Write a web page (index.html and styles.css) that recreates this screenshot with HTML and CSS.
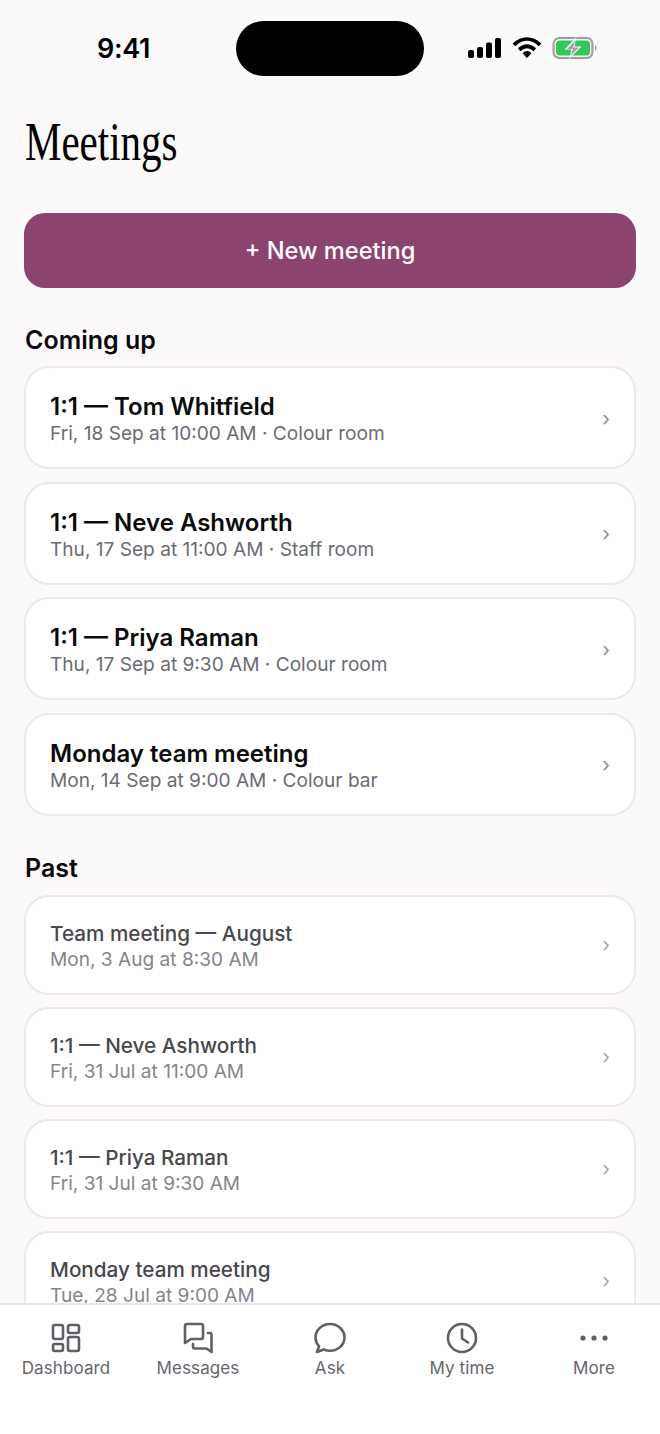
FILE: index.html
```html
<!DOCTYPE html>
<html lang="en">
<head>
    <meta charset="UTF-8">
    <meta name="viewport" content="width=device-width, initial-scale=1.0">
    <title>Meetings</title>
    <link rel="stylesheet" href="styles.css">
</head>
<body>
<div class="screen">
    <main class="content">
        <div class="status-bar">
            <span class="clock">9:41</span>
            <span class="island"></span>
            <span class="status-icons">
                <svg width="34" height="20" viewBox="0 0 34 20"><rect x="0" y="12" width="6" height="8" rx="2"/><rect x="9" y="9" width="6" height="11" rx="2"/><rect x="18" y="4.500" width="6" height="15.500" rx="2"/><rect x="27" y="0" width="6" height="20" rx="2"/></svg>
                <svg width="30" height="22" viewBox="0 0 28 21"><path d="M1.500 7.500C9.500 .2 18.500 .2 26.500 7.500" class="wifi"/><path d="M6.500 12.200C11.500 7.800 16.500 7.800 21.500 12.200" class="wifi"/><path d="M9.800 15.500C12.500 12.700 15.500 12.700 18.200 15.500L14 20Z"/></svg>
                <svg width="47" height="22" viewBox="0 0 46 22"><rect x="1" y="1" width="39" height="20" rx="6" class="batt-frame"/><rect x="3.500" y="3.500" width="34" height="15" rx="3.500" class="batt-fill"/><path d="M42.500 8c2 .5 2 5.500 0 6z" class="batt-cap"/><path d="M24 0L12 12.500H19L16.500 22L29 9.500H22Z" class="batt-gap"/><path d="M23 3.500L14.500 12H20.500L18 19L26.500 10.500H20.500Z" class="batt-bolt"/></svg>
            </span>
        </div>

        <h1 class="page-title">Meetings</h1>
        <button class="new-btn">+ New meeting</button>

        <h2 class="section-title">Coming up</h2>
        <div class="list">
            <a class="card">
                <div><p class="card-name">1:1 — Tom Whitfield</p><p class="card-meta">Fri, 18 Sep at 10:00 AM · Colour room</p></div>
                <span class="chev">›</span>
            </a>
            <a class="card">
                <div><p class="card-name">1:1 — Neve Ashworth</p><p class="card-meta">Thu, 17 Sep at 11:00 AM · Staff room</p></div>
                <span class="chev">›</span>
            </a>
            <a class="card">
                <div><p class="card-name">1:1 — Priya Raman</p><p class="card-meta">Thu, 17 Sep at 9:30 AM · Colour room</p></div>
                <span class="chev">›</span>
            </a>
            <a class="card">
                <div><p class="card-name">Monday team meeting</p><p class="card-meta">Mon, 14 Sep at 9:00 AM · Colour bar</p></div>
                <span class="chev">›</span>
            </a>
        </div>

        <h2 class="section-title past-title">Past</h2>
        <div class="list past">
            <a class="card">
                <div><p class="card-name">Team meeting — August</p><p class="card-meta">Mon, 3 Aug at 8:30 AM</p></div>
                <span class="chev">›</span>
            </a>
            <a class="card">
                <div><p class="card-name">1:1 — Neve Ashworth</p><p class="card-meta">Fri, 31 Jul at 11:00 AM</p></div>
                <span class="chev">›</span>
            </a>
            <a class="card">
                <div><p class="card-name">1:1 — Priya Raman</p><p class="card-meta">Fri, 31 Jul at 9:30 AM</p></div>
                <span class="chev">›</span>
            </a>
            <a class="card">
                <div><p class="card-name">Monday team meeting</p><p class="card-meta">Tue, 28 Jul at 9:00 AM</p></div>
                <span class="chev">›</span>
            </a>
        </div>
    </main>

    <nav class="tabs">
        <a class="tab">
            <svg class="tab-icon" viewBox="0 0 32 32"><rect x="3" y="3" width="10" height="14" rx="2"/><rect x="18" y="3" width="11" height="8" rx="2"/><rect x="3" y="22" width="10" height="7" rx="2"/><rect x="18" y="15" width="11" height="14" rx="2"/></svg>
            <span>Dashboard</span>
        </a>
        <a class="tab">
            <svg class="tab-icon" viewBox="0 0 32 32"><path d="M3 4a2 2 0 0 1 2-2h14a2 2 0 0 1 2 2v11a2 2 0 0 1-2 2H9l-6 4z"/><path d="M26 11h2a1.500 1.500 0 0 1 1.500 1.500V30l-5-3.500H13a2 2 0 0 1-2-2V22"/></svg>
            <span>Messages</span>
        </a>
        <a class="tab">
            <svg class="tab-icon" viewBox="0 0 32 32"><path d="M16 2C8 2 1.500 8 1.500 15.500c0 3.400 1.300 6.400 3.500 8.800L3 30l6.800-2.500c1.900.9 4 1.300 6.200 1.300 8 0 14.500-6 14.500-13.300S24 2 16 2z"/></svg>
            <span>Ask</span>
        </a>
        <a class="tab">
            <svg class="tab-icon" viewBox="0 0 32 32"><circle cx="16" cy="16" r="14"/><path d="M16 7.500V16.500L22 20.500"/></svg>
            <span>My time</span>
        </a>
        <a class="tab">
            <svg class="tab-icon dots" viewBox="0 0 32 32"><circle cx="5" cy="16" r="2.600"/><circle cx="16" cy="16" r="2.600"/><circle cx="27" cy="16" r="2.600"/></svg>
            <span>More</span>
        </a>
    </nav>
</div>
</body>
</html>
```

FILE: styles.css
```css
* {
    box-sizing: border-box;
}
body {
    margin: 0;
    background-color: #fbf9fa;
    font-family: Inter, "Liberation Sans", sans-serif;
    color: #0b0b0c;
}
p, h1, h2 {
    margin: 0;
}
.screen {
    height: 1434px;
    display: flex;
    flex-direction: column;
    overflow: hidden;
}
.content {
    flex: 1;
    min-height: 0;
    overflow: hidden;
    padding: 21px 24px 0;
}

/* status bar */
.status-bar {
    display: flex;
    align-items: center;
    height: 55px;
}
.clock {
    width: 212px;
    padding-left: 73px;
    font-size: 27px;
    font-weight: 600;
    letter-spacing: -0.3px;
    color: #000;
}
.island {
    width: 188px;
    height: 55px;
    border-radius: 28px;
    background-color: #000;
}
.status-icons {
    display: flex;
    align-items: center;
    gap: 10px;
    margin-left: 44px;
    position: relative;
    top: -1px;
}
.status-icons svg {
    fill: #000;
    flex: none;
}
.status-icons .wifi {
    fill: none;
    stroke: #000;
    stroke-width: 3.600;
    stroke-linecap: butt;
}
.status-icons .batt-frame {
    fill: none;
    stroke: #9c9c9c;
    stroke-width: 2;
}
.status-icons .batt-fill {
    fill: #34c759;
}
.status-icons .batt-cap {
    fill: #9c9c9c;
}
.status-icons .batt-gap {
    fill: #fbf9fa;
}
.status-icons .batt-bolt {
    fill: #a3a3a8;
}

.page-title {
    margin-top: 37px;
    margin-left: 1px;
    width: 400px;
    height: 58px;
    font-family: "Liberation Serif", serif;
    font-weight: 400;
    font-size: 55px;
    line-height: 58px;
    color: #000;
    transform: scaleX(0.745);
    transform-origin: left center;
}
.new-btn {
    display: block;
    width: 100%;
    height: 75px;
    margin-top: 42px;
    border: none;
    border-radius: 21px;
    background-color: #8c446e;
    color: #fff;
    font-family: inherit;
    font-size: 23.600px;
    font-weight: 500;
}
.section-title {
    margin-top: 37px;
    padding-left: 1px;
    font-size: 25px;
    line-height: 30px;
    font-weight: 600;
}
.list {
    display: flex;
    flex-direction: column;
    gap: 12.500px;
    margin-top: 11px;
}
.card {
    display: flex;
    flex: none;
    align-items: center;
    justify-content: space-between;
    height: 103px;
    padding: 2px 24px 0 24px;
    background-color: #fff;
    border: 2px solid #ede9eb;
    border-radius: 25px;
}
.card-name {
    font-size: 24px;
    line-height: 29px;
    font-weight: 600;
}
.card-meta {
    font-size: 19.100px;
    line-height: 24px;
    color: #6b6b73;
}
.chev {
    font-size: 20px;
    line-height: 20px;
    color: #8e8e96;
}
.past {
    margin-top: 12px;
    gap: 12px;
}
.past .card {
    height: 100px;
}
.past .card-name {
    font-size: 20.700px;
    line-height: 27px;
    font-weight: 500;
    color: #47474c;
}
.past .card-meta {
    color: #85858d;
}
.past .chev {
    margin-top: -2px;
    color: #a9a9b0;
}

/* bottom tabs */
.tabs {
    flex: none;
    height: 131px;
    display: grid;
    grid-template-columns: repeat(5, 132px);
    padding-top: 17px;
    background-color: #fff;
    border-top: 2px solid #e8e6e7;
}
.tab {
    display: flex;
    flex-direction: column;
    align-items: center;
    gap: 2px;
    font-size: 17px;
    line-height: 24px;
    font-weight: 400;
    letter-spacing: 0.1px;
    color: #66666e;
}
.tab-icon {
    width: 32px;
    height: 32px;
    fill: none;
    stroke: #5f5f67;
    stroke-width: 2.600;
    stroke-linejoin: round;
    stroke-linecap: round;
}
.tab-icon.dots {
    fill: #5f5f67;
    stroke: none;
}
```
